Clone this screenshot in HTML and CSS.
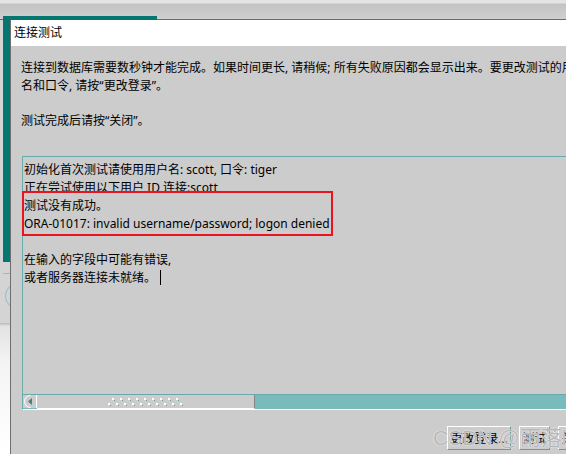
FILE: index.html
```html
<!DOCTYPE html>
<html lang="zh-CN">
<head>
  <meta charset="UTF-8">
  <title>连接测试</title>
  <link rel="stylesheet" href="styles.css">
</head>
<body>
  <div class="desktop">
    <div class="topbar"></div>

    <!-- window behind the dialog -->
    <div class="back-window"></div>
    <div class="back-lower">
      <div class="back-line"></div>
      <div class="back-arc"></div>
    </div>
    <div class="shelf"></div>

    <div class="dialog">
      <div class="title">连接测试</div>
      <div class="content">
        <p class="intro">连接到数据库需要数秒钟才能完成。如果时间更长, 请稍候; 所有失败原因都会显示出来。要更改测试的用户<br>名和口令, 请按“更改登录”。</p>
        <p class="intro">测试完成后请按“关闭”。</p>

        <div class="log">
          <div class="log-text">
            初始化首次测试请使用用户名: scott, 口令: tiger<br>
            正在尝试使用以下用户 ID 连接:scott<br>
            测试没有成功。<br>
            ORA-01017: invalid username/password; logon denied<br>
            <br>
            在输入的字段中可能有错误,<br>
            或者服务器连接未就绪。<span class="caret"></span>
          </div>
          <div class="mark"></div>
          <div class="hscroll">
            <div class="arrow">
              <svg width="14" height="13" viewBox="0 0 14 13">
                <path d="M7.5 0.5 A6 6 0 0 0 7.5 12.5" fill="none" stroke="#ffffff" stroke-width="1"/>
                <path d="M9 3 L5 6.5 L9 10 Z" fill="#4f7d7d"/>
                <line x1="13.5" y1="0" x2="13.5" y2="13" stroke="#ffffff"/>
              </svg>
            </div>
            <div class="thumb">
              <svg width="76" height="8" viewBox="0 0 76 8">
                <g fill="#ffffff">
                  <rect x="4" y="0" width="2" height="2"/><rect x="12" y="0" width="2" height="2"/>
                  <rect x="20" y="0" width="2" height="2"/><rect x="28" y="0" width="2" height="2"/>
                  <rect x="36" y="0" width="2" height="2"/><rect x="44" y="0" width="2" height="2"/>
                  <rect x="52" y="0" width="2" height="2"/><rect x="60" y="0" width="2" height="2"/>
                  <rect x="68" y="0" width="2" height="2"/>
                  <rect x="0" y="5" width="2" height="2"/><rect x="8" y="5" width="2" height="2"/>
                  <rect x="16" y="5" width="2" height="2"/><rect x="24" y="5" width="2" height="2"/>
                  <rect x="32" y="5" width="2" height="2"/><rect x="40" y="5" width="2" height="2"/>
                  <rect x="48" y="5" width="2" height="2"/><rect x="56" y="5" width="2" height="2"/>
                  <rect x="64" y="5" width="2" height="2"/><rect x="72" y="5" width="2" height="2"/>
                </g>
                <g fill="#5f9e9e">
                  <rect x="6" y="2" width="1" height="1"/><rect x="14" y="2" width="1" height="1"/>
                  <rect x="22" y="2" width="1" height="1"/><rect x="30" y="2" width="1" height="1"/>
                  <rect x="38" y="2" width="1" height="1"/><rect x="46" y="2" width="1" height="1"/>
                  <rect x="54" y="2" width="1" height="1"/><rect x="62" y="2" width="1" height="1"/>
                  <rect x="70" y="2" width="1" height="1"/>
                  <rect x="2" y="7" width="1" height="1"/><rect x="10" y="7" width="1" height="1"/>
                  <rect x="18" y="7" width="1" height="1"/><rect x="26" y="7" width="1" height="1"/>
                  <rect x="34" y="7" width="1" height="1"/><rect x="42" y="7" width="1" height="1"/>
                  <rect x="50" y="7" width="1" height="1"/><rect x="58" y="7" width="1" height="1"/>
                  <rect x="66" y="7" width="1" height="1"/><rect x="74" y="7" width="1" height="1"/>
                </g>
              </svg>
            </div>
            <div class="track"></div>
          </div>
        </div>

        <div class="actions">
          <button class="btn btn-wide">更改登录...</button>
          <button class="btn">测试</button>
          <button class="btn">关闭</button>
        </div>
      </div>
    </div>

    <div class="watermark">CSDN @雨落i</div>
  </div>
</body>
</html>
```

FILE: styles.css
```css
body {
  margin: 0;
  padding: 0;
  font-family: "Noto Sans", "Noto Sans CJK SC", sans-serif;
  font-size: 12px;
  color: #000;
  background-color: #d4d4d4;
}
.desktop {
  position: relative;
  width: 566px;
  height: 454px;
  overflow: hidden;
}
.topbar {
  height: 19px;
  background: linear-gradient(#e4e4e4 0, #e4e4e4 3px, #c3c3c3 4px, #d0d0d0 100%);
  border-bottom: 1px solid #6b6b6b;
}
.back-window {
  position: absolute;
  left: 3px;
  top: 16px;
  width: 154px;
  height: 246px;
  background-color: #067670;
}
.back-lower {
  position: absolute;
  left: 0;
  top: 262px;
  width: 10px;
  height: 61px;
  overflow: hidden;
}
.back-line {
  margin: 11px 0 0 3px;
  height: 1px;
  background-color: #8cc4c4;
}
.back-arc {
  margin: 11px 0 0 5px;
  width: 16px;
  height: 20px;
  border: 1px solid #8cc4c4;
  border-radius: 50%;
}
.shelf {
  position: absolute;
  left: 0;
  top: 323px;
  width: 10px;
  bottom: 0;
  background: linear-gradient(#b8b8b8 0, #e2e2e2 3px, #f4f4f4 40px, #fff 100%);
}
.dialog {
  position: absolute;
  left: 10px;
  top: 20px;
  bottom: 0;
  width: 589px;
  box-sizing: border-box;
  background-color: #cccccc;
  border-left: 1px solid #6e6e6e;
}
.title {
  height: 26px;
  line-height: 25px;
  padding-left: 3px;
  background-color: #fff;
}
.content {
  padding: 13px 10px 0 10px;
}
.intro {
  margin: 0;
  line-height: 17.5px;
  white-space: nowrap;
}
.intro + .intro {
  margin-top: 17.5px;
}
.log {
  position: relative;
  margin: 27px 0 0 1px;
  border-top: 1px solid #69abab;
  border-left: 1px solid #69abab;
  border-bottom: 1px solid #fff;
}
.log-text {
  height: 233px;
  padding: 4px 0 0 1px;
  line-height: 18px;
  white-space: nowrap;
}
.caret {
  display: inline-block;
  width: 1px;
  height: 15px;
  margin-left: 4px;
  vertical-align: -3px;
  background-color: #000;
}
.mark {
  position: absolute;
  left: -1px;
  top: 34px;
  width: 311px;
  height: 45px;
  box-sizing: border-box;
  border: 2px solid #e8141f;
}
.hscroll {
  display: flex;
  height: 14px;
  border-top: 1px solid #67aaaa;
  background-color: #79baba;
}
.arrow {
  width: 14px;
  height: 13px;
  background-color: #cccccc;
}
.arrow svg {
  display: block;
}
.thumb {
  width: 217px;
  height: 13px;
  display: flex;
  align-items: center;
  justify-content: center;
  background-color: #cccccc;
  border-right: 1px solid #858585;
  border-bottom: 1px solid #fff;
}
.thumb svg {
  display: block;
}
.track {
  flex: 1;
}
.actions {
  display: flex;
  justify-content: flex-end;
  gap: 8px;
  margin-top: 16px;
}
.btn {
  width: 31px;
  height: 24px;
  padding: 0;
  font-family: inherit;
  font-size: 12px;
  color: #000;
  background-color: #cccccc;
  border: 1px solid;
  border-color: #fff #6a9c9c #6a9c9c #fff;
  white-space: nowrap;
}
.btn-wide {
  width: 64px;
}
.watermark {
  position: absolute;
  left: 433px;
  top: 421px;
  font-family: "Liberation Sans", "Noto Sans CJK SC", sans-serif;
  font-size: 21px;
  color: rgba(110, 110, 110, 0.5);
  text-shadow: 0 0 1px #fff, 0 0 1px #fff;
  white-space: nowrap;
  pointer-events: none;
}
```
